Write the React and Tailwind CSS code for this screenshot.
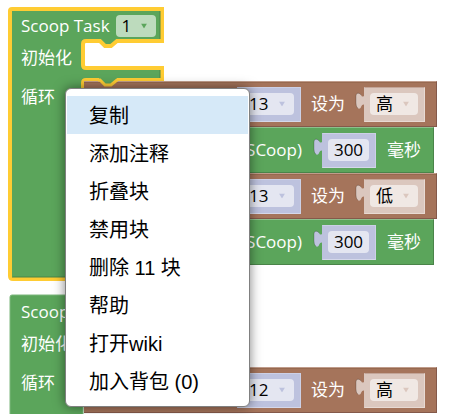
import React from "react";

const BLOCK_FONT = "font-['Open_Sans','Noto_Sans_CJK_SC',sans-serif]";
const MENU_FONT = "font-['Liberation_Sans','Noto_Sans_CJK_SC',sans-serif]";

const menuItems = [
  "复制",
  "添加注释",
  "折叠块",
  "禁用块",
  "删除 11 块",
  "帮助",
  "打开wiki",
  "加入背包 (0)",
];

// Outline of the C-shaped task block, with its two statement slots.
const TASK_PATH =
  "M4 2H154V34H109L103 39H97L92 34H78Q75 34 75 37V58Q75 61 78 61H154V73H109L103 78H97L92 73H78Q75 73 75 76V256Q75 259 78 259H154V272H5Q2 272 2 269V4Q2 2 4 2Z";

function Arrow({ className }) {
  return (
    <svg
      viewBox="0 0 6 5"
      className={`pointer-events-none absolute top-1/2 right-[9px] h-[5px] w-[6px] -translate-y-1/2 ${className}`}
      aria-hidden="true"
    >
      <path d="M0 0H6L3 5Z" fill="currentColor" />
    </svg>
  );
}

function Dropdown({ label, value, options, width, fill, arrow }) {
  return (
    <span className={`relative block h-[22px] ${width}`}>
      <select
        aria-label={label}
        defaultValue={value}
        className={`block h-full w-full appearance-none rounded px-[6px] text-[17px] leading-[22px] text-black outline-none ${fill}`}
      >
        {options.map((o) => (
          <option key={o}>{o}</option>
        ))}
      </select>
      <Arrow className={arrow} />
    </span>
  );
}

function ValueBlock({ tone, children }) {
  return (
    <span className="flex items-start">
      <svg
        viewBox="0 0 10 18"
        className="relative mt-[5px] -mr-px h-[18px] w-[10px]"
        aria-hidden="true"
      >
        <path
          d="M10 3C8 5 7 5 6 3C5 1 1 0 1 4V11C1 17 5 18 6 15C7 12 9 12 10 13Z"
          className={tone === "pink" ? "fill-[#dbc7be]" : "fill-[#bdc2de]"}
        />
        <path
          d="M6 3C5 1 1 0 1 4V11C1 14 2 16 3 16"
          fill="none"
          stroke="#000"
          strokeOpacity="0.2"
        />
      </svg>
      <span
        className={`flex h-[35px] items-center border pr-[6px] pl-[5px] ${
          tone === "pink"
            ? "border-t-[#c3a598] border-r-[#e8dad3] border-b-[#e8dad3] border-l-[#dbc7be] bg-[#dbc7be]"
            : "border-t-[#ccd0e6] border-r-[#ccd0e6] border-b-[#d5d8ea] border-l-[#bdc2de] bg-[#bdc2de]"
        }`}
      >
        {children}
      </span>
    </span>
  );
}

function PinWrite({ pin, level }) {
  return (
    <div className="flex h-[46px] w-[353px] items-center justify-end gap-[10px] border-t border-r border-b border-t-[#c09c8b] border-r-[#84594a] border-b-[#84594a] bg-[#a5745b] pr-[11px] shadow-[inset_0_1px_0_#97694f]">
      <ValueBlock tone="blue">
        <Dropdown
          label="管脚"
          value={pin}
          options={["12", "13"]}
          width="w-[51px]"
          fill="bg-[#e4e6f1]"
          arrow="text-[#bdc2de]"
        />
      </ValueBlock>
      <span>设为</span>
      <ValueBlock tone="pink">
        <Dropdown
          label="电平"
          value={level}
          options={["高", "低"]}
          width="w-[48px]"
          fill="bg-[#f0e8e4]"
          arrow="text-[#dbc7be]"
        />
      </ValueBlock>
    </div>
  );
}

function Delay({ ms }) {
  return (
    <div className="flex h-[46px] w-[350px] items-center justify-end gap-[11px] border-t border-r border-b border-t-[#8cc08c] border-r-[#4a8449] border-b-[#4a8449] bg-[#5ba55b] pr-[12px]">
      <span>(SCoop)</span>
      <ValueBlock tone="blue">
        <input
          aria-label="毫秒"
          defaultValue={ms}
          className="block h-[22px] w-[41px] rounded bg-[#e4e6f1] text-center text-[17px] leading-[22px] text-black outline-none"
        />
      </ValueBlock>
      <span>毫秒</span>
    </div>
  );
}

function Task({ place, selected, children }) {
  return (
    <section className={`absolute ${place}`}>
      <svg
        viewBox="0 0 156 274"
        className="absolute top-0 left-0 h-[274px] w-[156px] overflow-visible"
        aria-hidden="true"
      >
        <path
          d={TASK_PATH}
          fill="#5ba55b"
          stroke={selected ? "#fc3" : "#7cb77c"}
          strokeWidth={selected ? 4 : 1}
          strokeLinejoin={selected ? "miter" : "round"}
        />
        {selected && (
          <path d="M152 4V32M152 63V71M4 270H152" fill="none" stroke="#4a8449" />
        )}
      </svg>
      <div className="relative">
        <header className="flex h-[37px] items-center gap-[6px] pl-[13px]">
          <span>Scoop Task</span>
          <Dropdown
            label="Scoop Task"
            value="1"
            options={["1", "2"]}
            width="w-[40px]"
            fill="bg-[#bddbbd]"
            arrow="text-[#5ba55b]"
          />
        </header>
        <div className="flex h-[37px] pt-[2px] pl-[13px] leading-[24px]">初始化</div>
        <div className="flex">
          <div className="w-[76px] pt-[4px] pl-[13px] leading-[24px]">循环</div>
          <div className="relative">
            {children}
            <svg
              viewBox="0 0 20 9"
              className="absolute -top-[3px] left-[14px] h-[9px] w-[20px]"
              aria-hidden="true"
            >
              <path d="M1 2L7 7H13L19 2V0H1Z" fill="#5ba55b" />
              <path
                d="M0 2H2L7 7H13L19 2H20"
                fill="none"
                stroke={selected ? "#fc3" : "#c09c8b"}
                strokeWidth={selected ? 3 : 1}
              />
            </svg>
          </div>
        </div>
      </div>
    </section>
  );
}

function ContextMenu() {
  return (
    <div
      role="menu"
      className={`absolute top-[88px] left-[65px] w-[185px] rounded-md border border-[#808080] bg-white pt-[7px] pb-[6px] text-[20px] text-black shadow-[0_0_12px_rgba(0,0,0,0.5)] ${MENU_FONT}`}
    >
      {menuItems.map((item, i) => (
        <button
          key={item}
          type="button"
          role="menuitem"
          className={`mx-px block h-[38px] w-[181px] pt-[2px] pl-[22px] text-left leading-[36px] ${
            i === 0 ? "bg-[#d6e9f8]" : "hover:bg-[#d6e9f8]"
          }`}
        >
          {item}
        </button>
      ))}
    </div>
  );
}

export default function App() {
  return (
    <main
      className={`relative h-screen w-full overflow-hidden bg-white text-[17px] leading-[24px] whitespace-nowrap text-white ${BLOCK_FONT}`}
    >
      <Task place="top-[7px] left-[8px]" selected>
        <PinWrite pin="13" level="高" />
        <Delay ms="300" />
        <PinWrite pin="13" level="低" />
        <Delay ms="300" />
      </Task>
      <Task place="top-[293px] left-[8px]">
        <PinWrite pin="12" level="高" />
      </Task>
      <ContextMenu />
    </main>
  );
}
